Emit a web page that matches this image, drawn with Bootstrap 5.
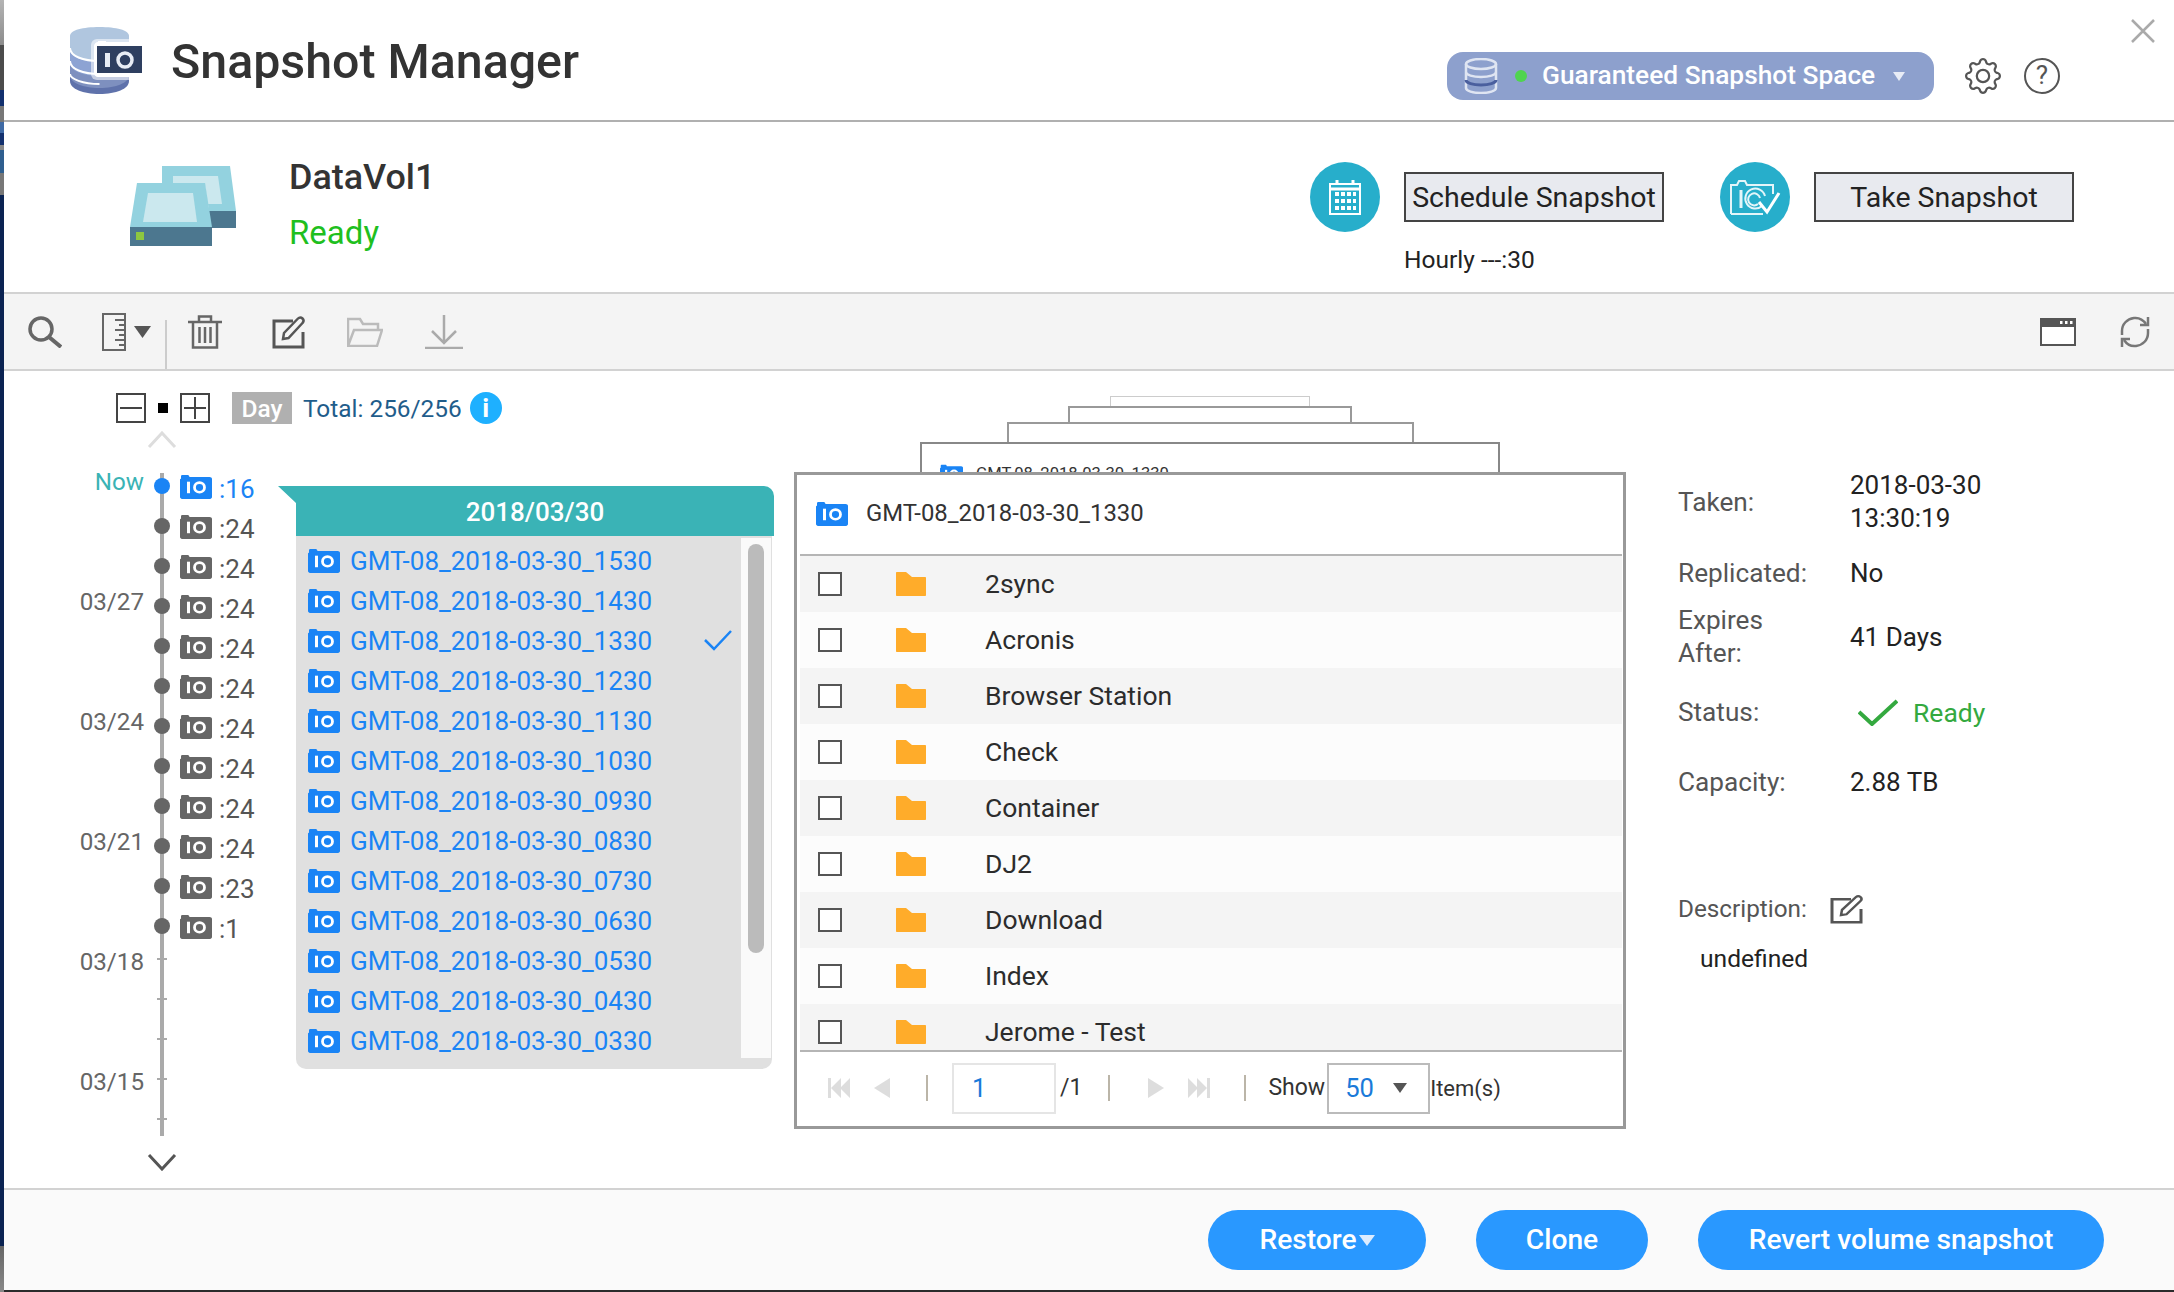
<!DOCTYPE html>
<html lang="en"><head><meta charset="utf-8"><title>Snapshot Manager</title>
<link href="https://cdn.jsdelivr.net/npm/bootstrap@5.3.0/dist/css/bootstrap.min.css" rel="stylesheet">
<style>
html,body{margin:0;background:#fff}
body{font-family:Roboto,"Liberation Sans",sans-serif;color:#222;overflow:hidden}
.app-shell{width:2174px;height:1292px;overflow:hidden}
.edge-strip{width:4px;flex:none;background:linear-gradient(#b4b4b4 0,#8c8c8c 45px,#4c4c4c 45px,#4c4c4c 90px,#12306e 90px,#12306e 106px,#777 106px,#777 122px,#3f6aa5 122px,#3f6aa5 133px,#14316f 133px,#14316f 145px,#888 145px,#888 150px,#2f5f8f 150px,#2f5f8f 173px,#777 173px,#777 195px,#0b2352 195px,#0b2352 1246px,#666 1246px,#888 1292px)}
.app-main{width:2170px;height:1292px;background:#fff}
.foot-strip{height:2px;background:#2b2b2b}
.top-head{height:122px;border-bottom:2px solid #b0b0b0;flex:none;position:relative}
.logo-svg{margin:27px 0 0 66px;flex:none}
.app-title{font-size:48.3px;font-weight:500;line-height:54px;color:#333;margin:35px 0 0 19px}
.space-pill{width:487px;height:48px;margin-top:52px;background:#8da0cd;border-radius:16px;color:#fff;font-size:26.3px;font-weight:500;padding-left:17px}
.pill-dot{width:12px;height:12px;background:#4fd44f;border-radius:50%;margin:0 15px 0 17px}
.pill-caret{width:0;height:0;border:6px solid transparent;border-top:9px solid #e8ecf6;border-bottom:0;margin-left:18px}
.head-gear{margin:58px 0 0 31px;flex:none}
.head-help{width:36px;height:36px;border:2.5px solid #555;border-radius:50%;font-size:26px;line-height:31px;text-align:center;color:#555;margin:58px 0 0 23px;flex:none}
.head-close{margin:19px 19px 0 71px;flex:none}
.info-band{height:172px;border-bottom:2px solid #d2d2d2;flex:none}
.drive-svg{margin:43px 0 0 126px;flex:none}
.vol-block{margin-left:53px}
.vol-name{font-size:35.9px;font-weight:500;line-height:44px;color:#333;margin-top:33px}
.vol-state{font-size:33px;line-height:44px;color:#1fbf1f;margin-top:12px}
.round-ico{width:70px;height:70px;border-radius:50%;background:#27aecb;flex:none}
.snap-btn{width:260px;height:50px;border:2px solid #444;background:#e8eaef;color:#222;font-size:28.5px;border-radius:0;padding:2px 0 0;line-height:44px;margin-left:24px}
.hour-note{font-size:24.5px;line-height:30px;margin:13px 0 0 94px;color:#222}
.act-one{margin-top:40px}
.act-two{margin:40px 100px 0 56px}
.tool-row{height:77px;border-bottom:2px solid #d2d2d2;background:#f4f4f4;flex:none}
.tool-sep{width:2px;height:49px;background:#ccc;align-self:flex-end;margin:0 21px 0 14px}
.tb-ruler{margin-left:40px}
.tb-caret{margin-left:8px}
.tb-edit{margin-left:50px;color:#555}
.tb-folder{margin-left:41px}
.tb-down{margin-left:42px}
.tb-sync{margin:0 23px 0 43px}
.work-area{height:817px;flex:none}
.left-block{width:790px;flex:none;padding-top:21px}
.zoom-row{height:32px;padding-left:112px}
.zoom-box{width:30px;height:30px;border:2px solid #444;flex:none}
.zoom-dot{width:10px;height:10px;background:#000;margin:0 12px}
.day-tag{width:60px;height:32px;background:#b0b0b0;color:#fff;font-size:24.5px;font-weight:500;line-height:34px;text-align:center;margin:0 11px 0 22px}
.total-text{font-size:24.4px;color:#1f5d8b;line-height:34px;height:32px}
.info-dot{width:32px;height:32px;border-radius:50%;background:#1eb0ff;color:#fff;font-weight:700;font-size:26px;line-height:32px;text-align:center;margin-left:8px}
.chev-row{height:42px;padding:0 0 10px 143px}
.chev-low{height:32px;padding:0 0 0 143px}
.tl-col{width:274px;flex:none}
.tl-row{height:40px}
.tl-date{width:140px;text-align:right;font-size:24.2px;line-height:30px;color:#666;margin-bottom:9px;flex:none}
.tl-date.is-now{color:#3ab3b5}
.tl-track{width:36px;height:40px;flex:none;background:linear-gradient(#aaa,#aaa) center/4px 100% no-repeat;position:relative}
.tl-track.is-first{background-size:4px 33px;background-position:center bottom}
.tl-track.is-last{background-size:4px 30px;background-position:center top}
.tl-node{width:16px;height:16px;border-radius:50%;background:#666;margin:12px auto 0}
.tl-node.is-cur{background:#1a84f5}
.tl-tick{width:10px;height:2px;background:#aaa;margin:12px auto 0}
.tl-count{font-size:26px;line-height:30px;color:#555;margin:6px 0 0 7px}
.tl-count.is-cur{color:#1a84f5}
.cam-ico{flex:none;color:#666}
.cam-blue{color:#1a84f5}
.date-panel{width:496px;flex:none;padding-top:20px}
.date-head{height:50px;margin-left:0;background:#3ab3b6;color:#fff;font-size:26px;font-weight:500;line-height:52px;text-align:center;border-top-right-radius:10px;clip-path:polygon(0 0,18px 17px,18px 100%,100% 100%,100% 0);padding-left:18px}
.date-body{height:533px;margin-left:18px;margin-right:2px;background:#e0e0e0;border-radius:0 0 10px 10px;overflow:hidden;position:relative}
.date-list{width:445px;padding-top:5px}
.date-item{height:40px;padding-left:12px;color:#1a84f5;font-size:26px}
.date-item .cam-ico{margin-top:-2px}
.date-item span{margin-left:10px}
.date-check{margin-left:auto;margin-right:9px;margin-top:-2px}
.date-track{width:30px;height:520px;background:#fafafa;margin-top:2px;margin-left:0;padding:6px 7px}
.date-thumb{width:16px;height:409px;background:#bbb;border-radius:8px}
.file-wrap{width:832px;flex:none;padding-top:25px}
.stack-card{background:#fff;border:2px solid #999;border-bottom:0;margin:0 auto;overflow:hidden}
.stack-a{width:200px;height:10px;border-width:1px;border-color:#ccc}
.stack-b{width:284px;height:16px}
.stack-c{width:407px;height:20px}
.stack-d{width:580px;height:30px;border-color:#888;padding:20px 0 0 18px;font-size:16.6px;line-height:20px;color:#333;white-space:nowrap}
.stack-d svg{margin-right:13px;vertical-align:top}
.file-panel{height:657px;border:3px solid #999;background:#fff}
.file-head{height:81px;margin:0 1px 0 3px;border-bottom:2px solid #b5b5b5;padding:0 0 2px 16px;font-size:23.9px;color:#333}
.file-head span{margin-left:18px}
.file-list{height:494px;overflow:hidden;margin:0 1px 0 3px}
.file-row{height:56px;padding-left:18px;font-size:26.5px;color:#2c2c2c}
.file-row:nth-child(odd){background:#f4f4f4}
.file-row:nth-child(even){background:#fcfcfc}
.file-box{width:24px;height:24px;border:2px solid #555;background:#fff;flex:none}
.file-name{margin-left:59px}
.folder-ico{margin-left:54px;flex:none}
.pager-row{height:76px;margin:0 1px 0 3px;border-top:2px solid #b5b5b5;font-size:23px;color:#333;padding:0 0 2px 28px}
.pg-sep{width:2px;height:26px;background:#bbb5a8;flex:none}
.pg-prev{margin-left:24px}
.pg-sep-a{margin-left:36px}
.pg-input{width:104px;height:51px;border:2px solid #e5e5e5;color:#1a7ad9;font-size:25.6px;line-height:47px;padding-left:18px;flex:none;margin-left:24px}
.pg-sep-b{margin-left:26px}
.pg-next{margin-left:38px}
.pg-last{margin-left:24px}
.pg-sep-c{margin-left:34px}
.pg-show{margin-left:22px}
.pg-select{width:103px;height:51px;border:2px solid #bbb;color:#1a7ad9;font-size:25.6px;line-height:47px;padding-left:16px;flex:none;margin:0 0 0 2px}
.pg-caret{width:0;height:0;border:7px solid transparent;border-top:10px solid #555;border-bottom:0;margin-left:19px}
.pg-items{font-size:22px}
.detail-col{width:480px;flex:none;margin-left:52px;padding-top:98px;font-size:26px;line-height:33px;color:#222}
.det-row{flex:none;height:33px}
.det-tall{height:66px}
.det-key{width:172px;color:#555;flex:none;font-size:26.2px}
.det-good{color:#34a93f;font-size:26.5px;margin-left:15px}
.det-check{margin-left:8px}
.gap-rep{margin-top:22px}
.gap-exp{margin-top:14px}
.gap-sta{margin-top:26px}
.gap-cap{margin-top:37px}
.gap-des{margin-top:93px}
.det-desc{width:152px;font-size:24.3px}
.det-desc-ico{color:#555}
.det-undef{margin:17px 0 0 22px;font-size:24.6px}
.btn-bar{height:102px;border-top:2px solid #d2d2d2;background:#fafafa;padding:20px 70px 0 0;flex:none}
.blue-btn{height:60px;background:#2998ff;border:0;color:#fff;font-size:28.2px;font-weight:500;border-radius:30px;padding:0;margin-left:50px}
.blue-btn:hover{background:#2998ff;color:#fff}
.btn-w1{width:218px}.btn-w2{width:172px}.btn-w3{width:406px}
.btn-caret{display:inline-block;width:0;height:0;border:8px solid transparent;border-top:11px solid #dcecff;border-bottom:0;margin-left:2px;vertical-align:3px}
</style></head>
<body>
<svg width="0" height="0" class="d-block" aria-hidden="true"><defs>
<symbol id="camio" viewBox="0 0 32 26" preserveAspectRatio="none">
<path fill="currentColor" d="M1 5V2.5C1 1.5 1.7 1 2.5 1h5C8.500 1 9 1.500 9.500 3H29.500C31 3 32 4 32 5V24C32 25 31 26 30 26H2C1 26 0 25 0 24V6C0 5.500.5 5 1 5Z"/>
<rect x="7" y="8" width="3" height="12" fill="#fff"/><circle cx="19.500" cy="14" r="5" fill="none" stroke="#fff" stroke-width="2.800"/>
</symbol>
<symbol id="folder" viewBox="0 0 30 24"><path fill="#ffac2a" d="M0 1C0 .4.400 0 1 0H10L16 5H29C29.600 5 30 5.400 30 6V23C30 23.600 29.600 24 29 24H1C.4 24 0 23.600 0 23Z"/></symbol>
<symbol id="editi" viewBox="0 0 34 34" preserveAspectRatio="none"><path fill="none" stroke="currentColor" stroke-width="3" d="M21 6H2V32H31V17"/><path fill="none" stroke="currentColor" stroke-width="2.500" d="M11 24l1-6L26 3.500c1.500-1.500 3-1.500 4.500 0s1.500 3 0 4.500L16.500 23Z"/></symbol>
</defs></svg>
<div class="app-shell d-flex">
<div class="edge-strip"></div>
<div class="app-main d-flex flex-column">
<header class="top-head d-flex align-items-start">
<svg class="logo-svg" width="82" height="67" viewBox="0 0 82 67"><path fill="#5f72ab" d="M0 48V54C0 62 13 67 29.500 67S59 62 59 54V48Z"/><path fill="#7e90bf" d="M0 36V48C0 56 13 61 29.500 61S59 56 59 48V36Z"/><path fill="#8da3d3" d="M0 22V36C0 44 13 49 29.500 49S59 44 59 36V22Z"/><path fill="#b0c6df" d="M0 9V22C0 30 13 35 29.500 35S59 30 59 22V9C59 3 46 0 29.500 0S0 3 0 9Z"/><path fill="none" stroke="#fff" stroke-width="2" d="M0 21C0 29 13 34 29.500 34M0 34C0 42 13 47 29.500 47M0 47C0 52 13 57 29.500 57"/><rect x="21" y="12" width="58" height="41" rx="6" fill="#fff" opacity=".55"/><path fill="#fff" d="M28 15V14H36V15H71C73 15 75 17 75 19V46C75 48 73 50 71 50H28C26 50 24 48 24 46V19C24 17 26 15 28 15Z"/><rect x="27" y="19" width="45" height="27" fill="#2e3f60"/><rect x="35" y="26" width="5" height="14" fill="#e8edf5"/><circle cx="55" cy="33" r="7" fill="none" stroke="#e8edf5" stroke-width="3.500"/></svg>
<div class="app-title">Snapshot Manager</div>
<div class="space-pill d-flex align-items-center ms-auto">
<svg width="34" height="36" viewBox="0 0 34 36"><ellipse cx="17" cy="6" rx="15" ry="5" fill="none" stroke="#dfe5f2" stroke-width="2.500"/><path fill="none" stroke="#dfe5f2" stroke-width="2.500" d="M2 6V30C2 33 9 35 17 35S32 33 32 30V6M2 14C2 17 9 19 17 19S32 17 32 14"/><path fill="none" stroke="#4a5f9e" stroke-width="3" d="M2 22C2 25 9 27 17 27S32 25 32 22"/></svg>
<span class="pill-dot"></span><span>Guaranteed Snapshot Space</span><span class="pill-caret"></span>
</div>
<svg class="head-gear" width="36" height="36" viewBox="0 0 16 16" fill="#555"><path d="M8 4.754a3.246 3.246 0 1 0 0 6.492 3.246 3.246 0 0 0 0-6.492zM5.754 8a2.246 2.246 0 1 1 4.492 0 2.246 2.246 0 0 1-4.492 0z"/><path d="M9.796 1.343c-.527-1.79-3.065-1.79-3.592 0l-.094.319a.873.873 0 0 1-1.255.52l-.292-.16c-1.64-.892-3.433.902-2.54 2.541l.159.292a.873.873 0 0 1-.52 1.255l-.319.094c-1.79.527-1.79 3.065 0 3.592l.319.094a.873.873 0 0 1 .52 1.255l-.16.292c-.892 1.64.901 3.434 2.541 2.54l.292-.159a.873.873 0 0 1 1.255.52l.094.319c.527 1.79 3.065 1.79 3.592 0l.094-.319a.873.873 0 0 1 1.255-.52l.292.16c1.64.893 3.434-.902 2.54-2.541l-.159-.292a.873.873 0 0 1 .52-1.255l.319-.094c1.79-.527 1.79-3.065 0-3.592l-.319-.094a.873.873 0 0 1-.52-1.255l.16-.292c.893-1.64-.902-3.433-2.541-2.54l-.292.159a.873.873 0 0 1-1.255-.52l-.094-.319zm-2.633.283c.246-.835 1.428-.835 1.674 0l.094.319a1.873 1.873 0 0 0 2.693 1.115l.291-.16c.764-.415 1.6.42 1.184 1.185l-.159.292a1.873 1.873 0 0 0 1.116 2.692l.318.094c.835.246.835 1.428 0 1.674l-.319.094a1.873 1.873 0 0 0-1.115 2.693l.16.291c.415.764-.42 1.6-1.185 1.184l-.291-.159a1.873 1.873 0 0 0-2.693 1.116l-.094.318c-.246.835-1.428.835-1.674 0l-.094-.319a1.873 1.873 0 0 0-2.692-1.115l-.292.16c-.764.415-1.6-.42-1.184-1.185l.159-.291A1.873 1.873 0 0 0 1.945 8.93l-.319-.094c-.835-.246-.835-1.428 0-1.674l.319-.094A1.873 1.873 0 0 0 3.06 4.377l-.16-.292c-.415-.764.42-1.6 1.185-1.184l.292.159a1.873 1.873 0 0 0 2.692-1.115l.094-.319z"/></svg>
<div class="head-help">?</div>
<svg class="head-close" width="24" height="24" viewBox="0 0 24 24"><path stroke="#aaa" stroke-width="2.500" d="M1 1L23 23M23 1L1 23"/></svg>
</header>
<section class="info-band d-flex align-items-start">
<svg class="drive-svg" width="106" height="82" viewBox="0 0 106 82"><path fill="#93d2df" d="M32 1H100L106 46H79L75 18H32Z"/><path fill="#cbe8ee" d="M43 11H88L92 39H78L75 18H43Z"/><path fill="#4c778f" d="M79 46H106V63H79Z"/><path fill="#93d2df" d="M7 18H75L82 62H0Z"/><path fill="#cbe8ee" d="M18 28H63L67 57H13Z"/><path fill="#4c778f" d="M0 62H82V81H0Z"/><rect x="6" y="67" width="8" height="8" fill="#8dc63f"/></svg>
<div class="vol-block"><div class="vol-name">DataVol1</div><div class="vol-state">Ready</div></div>
<div class="act-one ms-auto">
<div class="d-flex align-items-center"><div class="round-ico d-flex align-items-center justify-content-center"><svg width="32" height="36" viewBox="0 0 32 36" fill="none" stroke="#fff" stroke-width="2"><rect x="1" y="5" width="30" height="30"/><path d="M1 10H31M8 1V6M24 1V6" stroke-width="3"/><g fill="#fff" stroke="none"><rect x="6" y="13" width="4" height="4"/><rect x="12" y="13" width="4" height="4"/><rect x="18" y="13" width="4" height="4"/><rect x="24" y="13" width="3" height="4"/><rect x="6" y="20" width="4" height="4"/><rect x="12" y="20" width="4" height="4"/><rect x="18" y="20" width="4" height="4"/><rect x="24" y="20" width="3" height="4"/><rect x="6" y="27" width="4" height="4"/><rect x="12" y="27" width="4" height="4"/><rect x="18" y="27" width="4" height="4"/><rect x="24" y="27" width="3" height="4"/></g></svg></div><button class="btn snap-btn">Schedule Snapshot</button></div>
<div class="hour-note">Hourly ---:30</div>
</div>
<div class="act-two d-flex align-items-center"><div class="round-ico d-flex align-items-center justify-content-center"><svg width="52" height="38" viewBox="0 0 52 38" fill="none" stroke="#e4f5f9" stroke-width="2"><path d="M2 36V7H8L10 3H16L18 7H44V16M34 36H2"/><path d="M12 12V30" stroke-width="3"/><path d="M33 28A10 10 0 1 1 36 18M29 26A6 6 0 1 1 31 20"/><path d="M30 24L38 34L50 15" stroke="#fff" stroke-width="3"/></svg></div><button class="btn snap-btn">Take Snapshot</button></div>
</section>
<nav class="tool-row d-flex align-items-center">
<svg class="ms-4" width="34" height="32" viewBox="0 0 34 32" fill="none" stroke="#666" stroke-width="3.500"><circle cx="13" cy="13" r="11"/><path d="M21 21L33 31" stroke-width="4"/></svg>
<svg class="tb-ruler" width="24" height="38" viewBox="0 0 24 38" fill="none" stroke="#666" stroke-width="2"><rect x="1" y="1" width="22" height="36"/><path d="M13 7H23M17 12H23M13 17H23M17 22H23M13 27H23M17 32H23"/></svg>
<svg class="tb-caret" width="17" height="12" viewBox="0 0 17 12"><path fill="#555" d="M0 0H17L8.500 12Z"/></svg>
<span class="tool-sep"></span>
<svg width="34" height="34" viewBox="0 0 34 34" fill="none" stroke="#666" stroke-width="2.500"><path d="M0 7H34M11 7V1.500H23V7M5 7V32.500H29V7"/><path d="M11.500 12V28M17 12V28M22.500 12V28"/></svg>
<svg class="tb-edit" width="34" height="34"><use href="#editi"/></svg>
<svg class="tb-folder" width="36" height="30" viewBox="0 0 36 30" fill="none" stroke="#bbb" stroke-width="2.500"><path d="M1 29V2H13L16 7H31V13M1 29L7 13H35L30 29Z"/></svg>
<svg class="tb-down" width="38" height="34" viewBox="0 0 38 34" fill="none" stroke="#aaa" stroke-width="2.500"><path d="M19 0V27M7 16L19 28L31 16M0 33H38"/></svg>
<svg class="ms-auto" width="36" height="28" viewBox="0 0 36 28"><rect x="1" y="1" width="34" height="26" fill="#fff" stroke="#555" stroke-width="2"/><rect x="1" y="1" width="34" height="8" fill="#555"/><path fill="#fff" d="M20 3h2.500v3H20zM25 3h2.500v3H25zM30 3h2.500v3H30z"/></svg>
<svg class="tb-sync" width="32" height="32" viewBox="0 0 32 32" fill="none" stroke="#777" stroke-width="2.500"><path d="M27 8C24 3.500 19 1.500 15 2 8 3 3 8 3 15V19"/><path d="M5 24C8 28.500 13 30.500 17 30 24 29 29 24 29 17V13"/><path d="M21 9H29V1M11 23H3V31"/></svg>
</nav>
<main class="work-area d-flex align-items-start">
<div class="left-block">
<div class="zoom-row d-flex align-items-center">
<div class="zoom-box d-flex align-items-center justify-content-center"><svg width="22" height="2"><rect width="22" height="2" fill="#444"/></svg></div>
<span class="zoom-dot"></span>
<div class="zoom-box d-flex align-items-center justify-content-center"><svg width="22" height="22"><path d="M0 11H22M11 0V22" stroke="#444" stroke-width="2"/></svg></div>
<span class="day-tag">Day</span><span class="total-text">Total: 256/256</span><span class="info-dot">i</span>
</div>
<div class="chev-row d-flex align-items-center"><svg width="30" height="18" viewBox="0 0 30 18"><path fill="none" stroke="#ddd" stroke-width="3" d="M2 16L15 2L28 16"/></svg></div>
<div class="d-flex align-items-start">
<div class="tl-col"><div id="tl"></div><div class="chev-low d-flex align-items-center"><svg width="30" height="18" viewBox="0 0 30 18"><path fill="none" stroke="#555" stroke-width="3" d="M2 2L15 16L28 2"/></svg></div></div>
<div class="date-panel">
<div class="date-head">2018/03/30</div>
<div class="date-body d-flex">
<div class="date-list" id="dl"></div>
<div class="date-track"><div class="date-thumb"></div></div>
</div>
</div>
</div>
</div>
<div class="file-wrap">
<div class="stack-card stack-a"></div><div class="stack-card stack-b"></div><div class="stack-card stack-c"></div>
<div class="stack-card stack-d"><svg class="cam-blue" width="23" height="19"><use href="#camio"/></svg>GMT-08_2018-03-30_1330</div>
<div class="file-panel">
<div class="file-head d-flex align-items-center"><svg class="cam-blue" width="32" height="25"><use href="#camio"/></svg><span>GMT-08_2018-03-30_1330</span></div>
<div class="file-list" id="fl"></div>
<div class="pager-row d-flex align-items-center">
<svg width="22" height="20" viewBox="0 0 22 20" fill="#ddd"><rect width="3" height="20"/><path d="M13 0V20L3 10ZM22 0V20L12 10Z"/></svg>
<svg class="pg-prev" width="16" height="20" viewBox="0 0 16 20" fill="#ddd"><path d="M16 0V20L0 10Z"/></svg>
<span class="pg-sep pg-sep-a"></span>
<div class="pg-input">1</div>
<span class="ms-1">/1</span>
<span class="pg-sep pg-sep-b"></span>
<svg class="pg-next" width="16" height="20" viewBox="0 0 16 20" fill="#ddd"><path d="M0 0V20L16 10Z"/></svg>
<svg class="pg-last" width="22" height="20" viewBox="0 0 22 20" fill="#ddd"><path d="M0 0V20L10 10ZM9 0V20L19 10Z"/><rect x="19" width="3" height="20"/></svg>
<span class="pg-sep pg-sep-c"></span>
<span class="pg-show">Show</span>
<div class="pg-select d-flex align-items-center">50<span class="pg-caret"></span></div>
<span class="pg-items">Item(s)</span>
</div>
</div>
</div>
<aside class="detail-col">
<div class="det-row det-tall d-flex align-items-center"><div class="det-key">Taken:</div><div>2018-03-30<br>13:30:19</div></div>
<div class="det-row gap-rep d-flex align-items-center"><div class="det-key">Replicated:</div><div>No</div></div>
<div class="det-row det-tall gap-exp d-flex align-items-center"><div class="det-key">Expires<br>After:</div><div>41 Days</div></div>
<div class="det-row gap-sta d-flex align-items-center"><div class="det-key">Status:</div><svg class="det-check" width="40" height="27" viewBox="0 0 40 27"><path fill="none" stroke="#34a93f" stroke-width="4" d="M1 13L14 25L39 2"/></svg><span class="det-good">Ready</span></div>
<div class="det-row gap-cap d-flex align-items-center"><div class="det-key">Capacity:</div><div>2.88 TB</div></div>
<div class="det-row gap-des d-flex align-items-center"><div class="det-key det-desc">Description:</div><svg class="det-desc-ico" width="34" height="30"><use href="#editi"/></svg></div>
<div class="det-undef">undefined</div>
</aside>
</main>
<footer class="btn-bar d-flex justify-content-end align-items-start">
<button class="btn blue-btn btn-w1">Restore<span class="btn-caret"></span></button>
<button class="btn blue-btn btn-w2">Clone</button>
<button class="btn blue-btn btn-w3">Revert volume snapshot</button>
</footer>
<div class="foot-strip"></div>
</div></div>
<script>
var cam='<svg class="cam-ico CLS" width="32" height="25"><use href="#camio"/></svg>';
var tl=[['Now',':16'],['',':24'],['',':24'],['03/27',':24'],['',':24'],['',':24'],['03/24',':24'],['',':24'],['',':24'],['03/21',':24'],['',':23'],['',':1'],['03/18',''],['',''],['',''],['03/15',''],['','']];
document.getElementById('tl').innerHTML=tl.map(function(r,i){
 var cur=i==0,node=i<12;
 return '<div class="tl-row d-flex align-items-center"><div class="tl-date'+(cur?' is-now':'')+'">'+r[0]+'</div><div class="tl-track'+(i==0?' is-first':i==16?' is-last':'')+'">'+(node?'<div class="tl-node'+(cur?' is-cur':'')+'"></div>':'<div class="tl-tick"></div>')+'</div>'+(node?cam.replace('CLS',cur?'cam-blue':'')+'<div class="tl-count'+(cur?' is-cur':'')+'">'+r[1]+'</div>':'')+'</div>';
}).join('');
var t=['1530','1430','1330','1230','1130','1030','0930','0830','0730','0630','0530','0430','0330'];
document.getElementById('dl').innerHTML=t.map(function(x){
 return '<div class="date-item d-flex align-items-center">'+cam.replace('CLS','cam-blue')+'<span>GMT-08_2018-03-30_'+x+'</span>'+(x=='1330'?'<svg class="date-check" width="28" height="21" viewBox="0 0 28 21"><path fill="none" stroke="#1a84f5" stroke-width="2.500" d="M1 10L10 19L27 1"/></svg>':'')+'</div>';
}).join('');
var f=['2sync','Acronis','Browser Station','Check','Container','DJ2','Download','Index','Jerome - Test'];
document.getElementById('fl').innerHTML=f.map(function(x){
 return '<div class="file-row d-flex align-items-center"><span class="file-box"></span><svg class="folder-ico" width="30" height="24"><use href="#folder"/></svg><span class="file-name">'+x+'</span></div>';
}).join('');
</script>
<script src="https://cdn.jsdelivr.net/npm/bootstrap@5.3.0/dist/js/bootstrap.bundle.min.js"></script>
</body></html>
